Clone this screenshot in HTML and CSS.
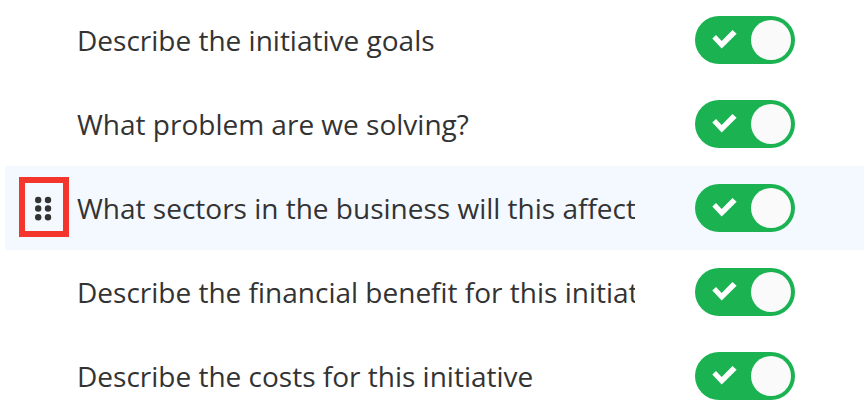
FILE: index.html
```html
<!DOCTYPE html>
<html lang="en">
<head>
<meta charset="utf-8">
<title>Initiative questions</title>
<link rel="stylesheet" href="styles.css">
</head>
<body>
<svg class="defs" aria-hidden="true"><symbol id="check" viewBox="0 0 26 20"><path d="M0.3 8.6 L4 5 L9.7 10.9 L20.5 0 L24.6 3.7 L9.7 18.6 Z" fill="#fff"/></symbol></svg>
<ul class="list">
<li class="row"><span class="handle"></span><span class="label">Describe the initiative goals</span><span class="toggle"><svg class="check"><use href="#check"/></svg><span class="knob"></span></span></li>
<li class="row"><span class="handle"></span><span class="label">What problem are we solving?</span><span class="toggle"><svg class="check"><use href="#check"/></svg><span class="knob"></span></span></li>
<li class="row active"><span class="handle marked"><svg class="grip" viewBox="0 0 38 48"><g fill="#333"><circle cx="13.2" cy="17" r="3.2"/><circle cx="23" cy="17" r="3.2"/><circle cx="13.2" cy="25.5" r="3.2"/><circle cx="23" cy="25.5" r="3.2"/><circle cx="13.2" cy="34.2" r="3.2"/><circle cx="23" cy="34.2" r="3.2"/></g></svg></span><span class="label">What sectors in the business will this affect?</span><span class="toggle"><svg class="check"><use href="#check"/></svg><span class="knob"></span></span></li>
<li class="row"><span class="handle"></span><span class="label">Describe the financial benefit for this initiative</span><span class="toggle"><svg class="check"><use href="#check"/></svg><span class="knob"></span></span></li>
<li class="row"><span class="handle"></span><span class="label">Describe the costs for this initiative</span><span class="toggle"><svg class="check"><use href="#check"/></svg><span class="knob"></span></span></li>
</ul>
</body>
</html>
```
FILE: styles.css
```css
* { box-sizing: border-box; }
body { margin: 0; height: 416px; overflow: hidden; background: #fff; color: #333; font-family: "Open Sans", sans-serif; font-size: 28px; }
.defs { display: none; }
.list { list-style: none; margin: -2px 0 0 5px; padding: 0; }
.row { display: flex; align-items: center; height: 84px; padding-left: 14px; }
.active { background: #f4f9ff; }
.handle { flex: none; display: flex; align-items: center; justify-content: center; width: 50px; height: 60px; margin: 0 8px 2px 0; }
.marked { border: 6px solid #f3352b; }
.grip { width: 38px; height: 48px; }
.label { flex: none; width: 558px; overflow: hidden; white-space: nowrap; line-height: 42px; }
.toggle { flex: none; display: flex; align-items: center; justify-content: space-between; width: 100px; height: 48px; margin-left: 60px; padding: 0 4px 0 17px; border-radius: 24px; background: #1bb352; }
.check { width: 26px; height: 20px; }
.knob { width: 40px; height: 40px; border-radius: 50%; background: #fafafa; }
```
